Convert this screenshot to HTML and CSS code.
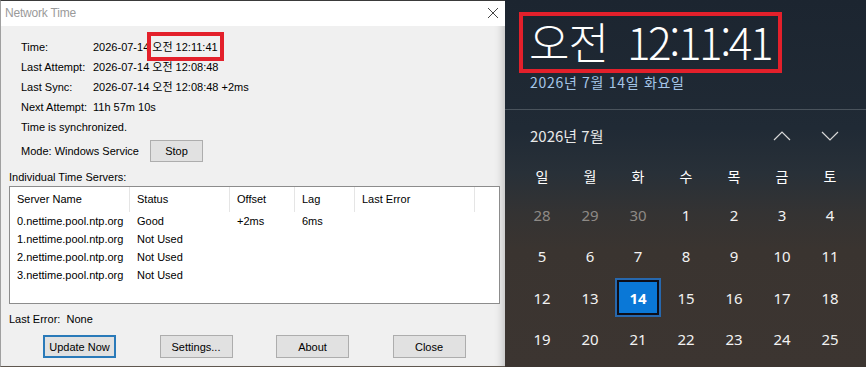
FILE: index.html
```html
<!DOCTYPE html>
<html lang="ko">
<head>
<meta charset="utf-8">
<title>Network Time</title>
<link rel="stylesheet" href="styles.css">
</head>
<body>
<div class="screen">
  <section class="dialog">
    <header class="titlebar">
      <span class="title">Network Time</span>
      <svg class="close" width="12" height="12" viewBox="0 0 12 12"><path d="M1 1 L11 11 M11 1 L1 11" stroke="#444" stroke-width="1" fill="none"/></svg>
    </header>
    <div class="body">
      <div class="info">
        <span>Time:</span><span>2026-07-14 오전 12:11:41</span>
        <span>Last Attempt:</span><span>2026-07-14 오전 12:08:48</span>
        <span>Last Sync:</span><span>2026-07-14 오전 12:08:48 +2ms</span>
        <span>Next Attempt:</span><span>11h 57m 10s</span>
        <span class="full">Time is synchronized.</span>
      </div>
      <div class="mode">
        <span class="mode-label">Mode: Windows Service</span>
        <button class="btn stop">Stop</button>
      </div>
      <div class="group-label">Individual Time Servers:</div>
      <div class="listbox">
        <div class="lrow head">
          <span>Server Name</span><span>Status</span><span>Offset</span><span>Lag</span><span>Last Error</span><span class="rest"></span>
        </div>
        <div class="lrow"><span>0.nettime.pool.ntp.org</span><span>Good</span><span>+2ms</span><span>6ms</span><span></span></div>
        <div class="lrow"><span>1.nettime.pool.ntp.org</span><span>Not Used</span><span></span><span></span><span></span></div>
        <div class="lrow"><span>2.nettime.pool.ntp.org</span><span>Not Used</span><span></span><span></span><span></span></div>
        <div class="lrow"><span>3.nettime.pool.ntp.org</span><span>Not Used</span><span></span><span></span><span></span></div>
      </div>
      <div class="last-error">Last Error:&nbsp; None</div>
      <div class="buttons">
        <button class="btn default">Update Now</button>
        <button class="btn">Settings...</button>
        <button class="btn">About</button>
        <button class="btn">Close</button>
      </div>
    </div>
    <div class="annot annot-small"></div>
  </section>

  <section class="panel">
    <div class="clock"><span class="ampm">오전</span><span class="hms">12:11:41</span></div>
    <div class="date">2026년 7월 14일 화요일</div>
    <div class="sep"></div>
    <div class="cal">
      <div class="month-row">
        <span class="month">2026년 7월</span>
        <span class="nav">
          <svg width="18" height="10" viewBox="0 0 18 10"><polyline points="1,9 9,1 17,9" fill="none" stroke="#d8d8d8" stroke-width="1.2"/></svg>
        </span>
        <span class="nav">
          <svg width="18" height="10" viewBox="0 0 18 10"><polyline points="1,1 9,9 17,1" fill="none" stroke="#d8d8d8" stroke-width="1.2"/></svg>
        </span>
      </div>
      <div class="grid">
        <span class="wd">일</span><span class="wd">월</span><span class="wd">화</span><span class="wd">수</span><span class="wd">목</span><span class="wd">금</span><span class="wd">토</span>
        <span class="d other">28</span><span class="d other">29</span><span class="d other">30</span><span class="d">1</span><span class="d">2</span><span class="d">3</span><span class="d">4</span>
        <span class="d">5</span><span class="d">6</span><span class="d">7</span><span class="d">8</span><span class="d">9</span><span class="d">10</span><span class="d">11</span>
        <span class="d">12</span><span class="d">13</span><span class="d"><span class="today">14</span></span><span class="d">15</span><span class="d">16</span><span class="d">17</span><span class="d">18</span>
        <span class="d">19</span><span class="d">20</span><span class="d">21</span><span class="d">22</span><span class="d">23</span><span class="d">24</span><span class="d">25</span>
      </div>
    </div>
    <div class="annot annot-big"></div>
  </section>
</div>
</body>
</html>
```
FILE: styles.css
```css
* { box-sizing: border-box; margin: 0; padding: 0; }
html, body { width: 866px; height: 367px; overflow: hidden; }
body {
  background: #3b3531;
  font-family: "Liberation Sans", Arial, "Noto Sans CJK KR", sans-serif;
  font-size: 11px;
  color: #000;
}
.screen { display: flex; height: 367px; }

/* ---------- dialog ---------- */
.dialog {
  position: relative;
  width: 505px;
  flex: none;
  display: flex;
  flex-direction: column;
  background: #f0f0f0;
  border-top: 1px solid #3a3a3a;
  border-left: 1px solid #a0a0a0;
  border-bottom: 1px solid #5f574f;
  box-shadow: inset -9px 0 8px -7px rgba(0, 0, 0, 0.22);
}
.titlebar {
  height: 25px;
  background: #fff;
  display: flex;
  align-items: center;
  justify-content: space-between;
  padding: 0 6px 2px 4px;
}
.title { font-size: 12px; color: #9a9a9a; letter-spacing: -0.2px; }

.body { padding: 11px 0 0 8px; display: flex; flex-direction: column; }
.info {
  margin-left: 12px;
  display: grid;
  grid-template-columns: 72px auto;
  grid-auto-rows: 20px;
  line-height: 20px;
}
.info .full { grid-column: 1 / 3; }
.mode { margin: 3px 0 0 12px; display: flex; align-items: center; height: 22px; }
.mode-label { width: 129px; }

.btn {
  font-family: inherit;
  font-size: 11px;
  color: #000;
  background: #e1e1e1;
  border: 1px solid #adadad;
  height: 23px;
  width: 73px;
}
.btn.stop { width: 53px; height: 22px; }
.btn.default { border: 2px solid #2a7ab9; }

.group-label { margin-top: 8px; line-height: 14px; }
.listbox {
  margin-top: 2px;
  width: 491px;
  height: 118px;
  background: #fff;
  border: 1px solid #8c8c8c;
}
.lrow {
  display: grid;
  grid-template-columns: 120px 100px 65px 60px 120px 1fr;
  height: 18px;
  line-height: 18px;
}
.lrow span { padding-left: 7px; white-space: nowrap; overflow: hidden; }
.lrow.head { height: 25px; line-height: 25px; }
.lrow.head span { border-right: 1px solid #e5e5e5; }
.lrow.head span.rest { border-right: 0; }

.last-error { margin-top: 8px; line-height: 14px; }
.buttons { margin: 9px 0 0 34px; display: flex; gap: 43.5px; }

.annot {
  position: absolute;
  border: 4px solid #e3202b;
  pointer-events: none;
}
.annot-small { left: 146px; top: 31px; width: 77px; height: 29px; }

/* ---------- calendar panel ---------- */
.panel {
  position: relative;
  flex: 1;
  background: linear-gradient(to bottom, #1c2530 0%, #202a35 35%, #283038 47%, #343333 58%, #3a3430 68%, #3c3531 100%);
  font-family: "Noto Sans", "Noto Sans CJK KR", sans-serif;
  color: #fff;
}
.clock {
  padding: 19px 0 0 24px;
  font-family: "Noto Sans CJK KR", sans-serif;
  font-weight: 300;
  font-size: 44px;
  line-height: 44px;
  height: 73px;
  display: flex;
  gap: 19px;
}
.ampm { letter-spacing: -1px; }
.hms { letter-spacing: -2.4px; }
.date {
  padding-left: 25px;
  font-family: "Noto Sans CJK KR", sans-serif;
  font-size: 14px;
  line-height: 18px;
  letter-spacing: 0.7px;
  color: #a5c6e8;
}
.sep { margin-top: 18px; height: 1px; background: #4a535c; }

.cal { padding: 0 0 0 13px; }
.month-row {
  display: grid;
  grid-template-columns: 240px 48px 48px;
  align-items: start;
  height: 48px;
  padding-top: 16px;
  line-height: 20px;
}
.month { padding-left: 12px; font-family: "Noto Sans CJK KR", sans-serif; font-size: 15px; color: #e8e8e8; }
.nav { display: flex; justify-content: center; align-items: center; height: 20px; }

.grid {
  display: grid;
  grid-template-columns: repeat(7, 48px);
  grid-template-rows: 36px repeat(4, 41.5px);
}
.wd {
  display: flex; align-items: center; justify-content: center;
  font-family: "Noto Sans CJK KR", sans-serif;
  font-size: 14px;
}
.d {
  display: flex; align-items: center; justify-content: center;
  font-size: 15px;
  color: #f2f2f2;
}
.d.other { color: #8e8a86; }
.today {
  width: 46px; height: 39px;
  display: flex; align-items: center; justify-content: center;
  background: #0a78d7;
  border: 2px solid #2768ae;
  box-shadow: inset 0 0 0 2px #0d0f1a;
  font-weight: 700;
  color: #fff;
}
.annot-big { left: 14px; top: 12px; width: 263px; height: 61px; }
```
